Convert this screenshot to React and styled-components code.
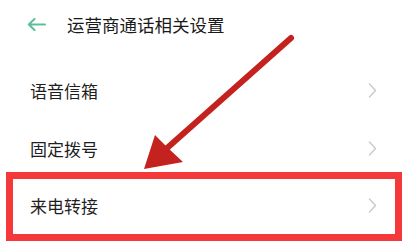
import React from "react";
import styled, { createGlobalStyle } from "styled-components";

const Global = createGlobalStyle`
  html, body {
    margin: 0;
    padding: 0;
    background: #ffffff;
  }
  body {
    font-family: "Noto Sans CJK SC", "Noto Sans", sans-serif;
  }
`;

const Screen = styled.div`
  position: relative;
  width: 415px;
  height: 252px;
  overflow: hidden;
  background: #ffffff;
`;

const Header = styled.div`
  height: 48px;
  display: flex;
  align-items: center;
  gap: 21px;
  padding-left: 27px;
`;

const Title = styled.div`
  font-size: 17.5px;
  color: #1a1a1a;
`;

const List = styled.div`
  padding-top: 14px;
  display: flex;
  flex-direction: column;
`;

const Row = styled.div`
  height: 57.5px;
  display: flex;
  align-items: center;
  justify-content: space-between;
  padding: 0 38px 0 30px;
`;

const Label = styled.span`
  font-size: 17px;
  color: #1f1f1f;
`;

const Highlight = styled.div`
  position: absolute;
  left: 6px;
  top: 172px;
  width: 396px;
  height: 69px;
  box-sizing: border-box;
  border: 7.5px solid #f5383a;
  pointer-events: none;
`;

const Pointer = styled.svg`
  position: absolute;
  left: 0;
  top: 0;
  pointer-events: none;
`;

function BackArrow() {
  return (
    <svg width="19" height="13" viewBox="0 0 19 13">
      <path
        d="M18 6.5H2M7.5 1L1.8 6.5L7.5 12"
        fill="none"
        stroke="#5cbf98"
        strokeWidth="2"
        strokeLinecap="round"
        strokeLinejoin="round"
      />
    </svg>
  );
}

function Chevron() {
  return (
    <svg width="9" height="15" viewBox="0 0 9 15">
      <path
        d="M1.5 1L7.5 7.5L1.5 14"
        fill="none"
        stroke="#cccccc"
        strokeWidth="1.5"
        strokeLinecap="round"
        strokeLinejoin="round"
      />
    </svg>
  );
}

const items = ["语音信箱", "固定拨号", "来电转接"];

export default function App() {
  return (
    <Screen>
      <Global />
      <Header>
        <BackArrow />
        <Title>运营商通话相关设置</Title>
      </Header>
      <List>
        {items.map((t) => (
          <Row key={t}>
            <Label>{t}</Label>
            <Chevron />
          </Row>
        ))}
      </List>
      <Highlight />
      <Pointer width="415" height="252" viewBox="0 0 415 252">
        <line
          x1="291"
          y1="38"
          x2="166"
          y2="149"
          stroke="#c4221e"
          strokeWidth="6"
          strokeLinecap="round"
        />
        <polygon points="144,169 155,135 168,148 183,162" fill="#c4221e" />
      </Pointer>
    </Screen>
  );
}
